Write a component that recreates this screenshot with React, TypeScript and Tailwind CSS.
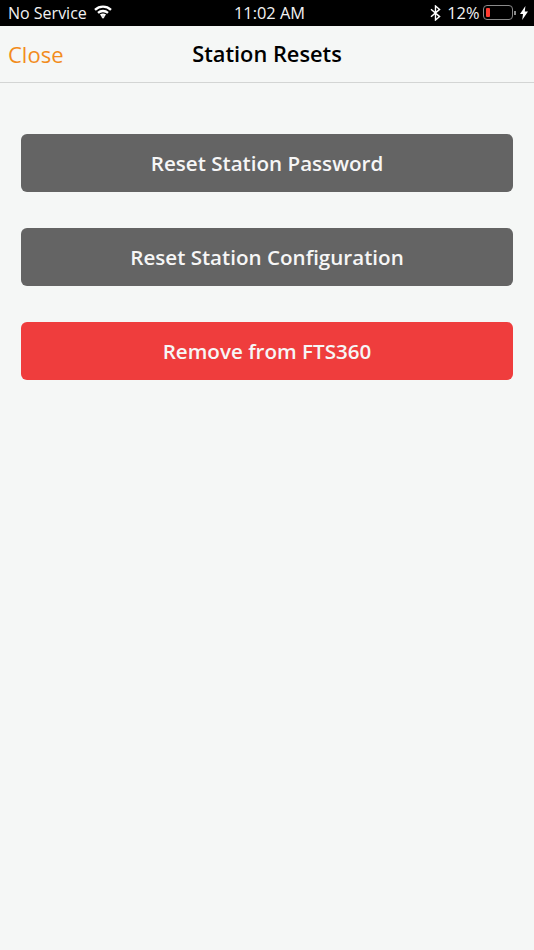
export default function App() {
  const btn = 'flex h-[58px] w-full items-center justify-center rounded-[6px] pt-[1px] text-[20.6px] font-semibold text-[#f6f6f6]'

  return (
    <div className="flex h-[950px] w-[534px] flex-col overflow-hidden bg-[#f5f7f6]">
      {/* status bar */}
      <div className="flex h-[26px] items-center justify-between bg-black pl-[8px] pr-[6px] font-['Open_Sans',sans-serif] text-[16px] text-[#f2f2f2]">
        <div className="flex w-[178px] items-center gap-[8px]">
          <span>No Service</span>
          <svg width="18" height="14" viewBox="0 0 18 14" fill="none" stroke="white" strokeWidth="2.4" className="-ml-[1px] mb-[3px]">
            <path d="M1 4.8C5.6 .6 12.4 .6 17 4.8" />
            <path d="M4 7.8C6.8 5.4 11.2 5.4 14 7.8" />
            <path d="M6.7 10.5C8 9.5 10 9.5 11.3 10.5" />
            <path d="M9 13.8l-2-2.4c1.2-.7 2.8-.7 4 0z" fill="white" stroke="none" />
          </svg>
        </div>
        <span className="ml-[3px] text-[16.4px]">11:02 AM</span>
        <div className="flex w-[178px] items-center justify-end">
          <svg width="11" height="16" viewBox="0 0 11 16" fill="none" stroke="white" strokeWidth="1.4" className="mr-[6px]">
            <path d="M1 4.2l8.6 7.4L5.5 15V1l4.1 3.4L1 11.8" />
          </svg>
          <span className="mr-[4px] text-[16.4px]">12%</span>
          <div className="h-[15px] w-[30px] rounded-[4px] border border-[#8a8a8a] p-[2px]">
            <div className="h-full w-[4px] rounded-[1px] bg-[#ff3b30]" />
          </div>
          <div className="ml-[1px] mr-[4px] h-[4px] w-[1.5px] bg-[#8a8a8a]" />
          <svg width="8" height="14" viewBox="0 0 8 14" fill="white">
            <path d="M5.4 0L0 8h3L2.2 14 8 5.6H4.8z" />
          </svg>
        </div>
      </div>

      {/* nav bar */}
      <div className="flex h-[57px] items-center justify-between border-b border-[#d3d5d4] bg-[#f5f7f6] pl-[8px] font-['Open_Sans',sans-serif]">
        <span className="w-[100px] text-[22px] text-[#f28c1c]">Close</span>
        <span className="text-[21.8px] font-semibold text-black">Station Resets</span>
        <span className="w-[108px]" />
      </div>

      {/* actions */}
      <div className="flex flex-col gap-[36px] px-[21px] pt-[51px] font-['Open_Sans',sans-serif]">
        <button className={`${btn} bg-[#646464]`}>Reset Station Password</button>
        <button className={`${btn} bg-[#646464]`}>Reset Station Configuration</button>
        <button className={`${btn} bg-[#ef3d3d]`}>Remove from FTS360</button>
      </div>
    </div>
  )
}
